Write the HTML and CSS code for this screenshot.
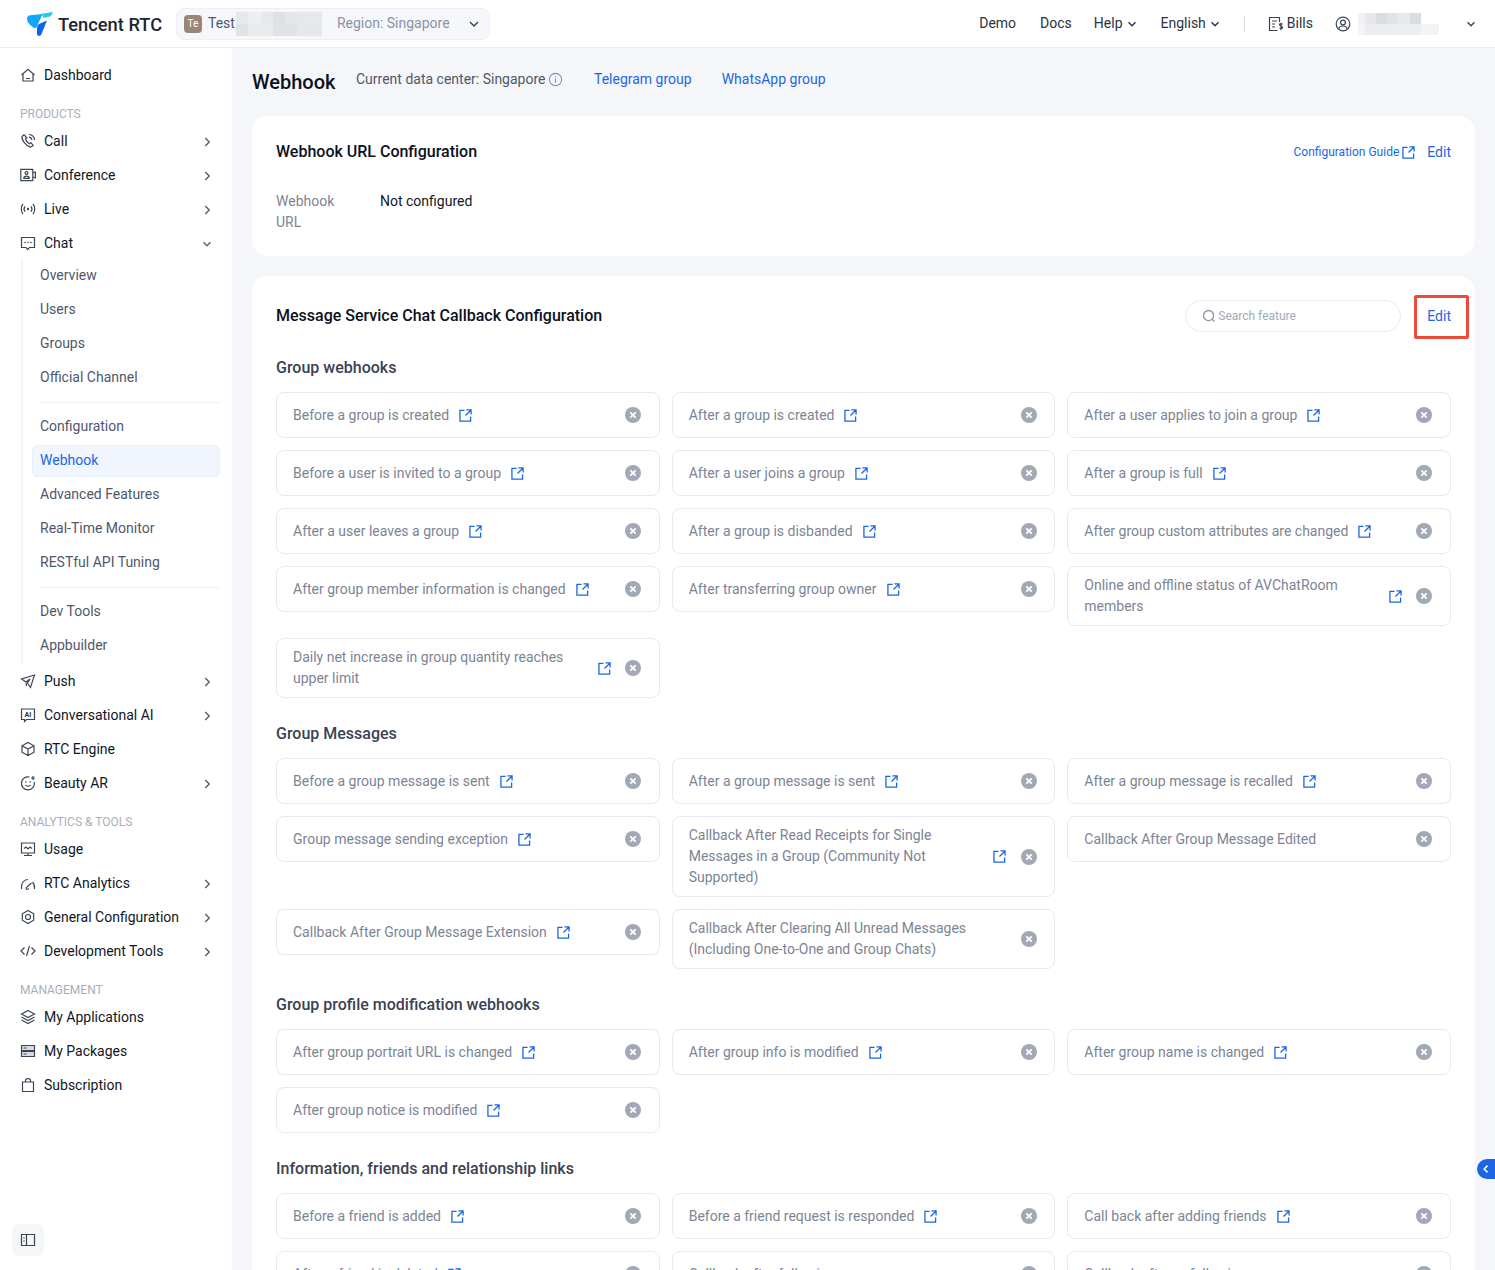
FILE: index.html
```html
<!DOCTYPE html>
<html>
<head>
	<title>Webhook - Tencent RTC</title>
	<meta charset="utf-8">
	<link rel="stylesheet" href="styles.css">
</head>
<body>

	<!-- Icon sprite -->
	<svg class="sprite" xmlns="http://www.w3.org/2000/svg">
		<symbol id="i-home" viewBox="0 0 16 16"><path d="M1.500 8 8 2.200 14.500 8M3 7v7h10V7M6 11.500h4"/></symbol>
		<symbol id="i-call" viewBox="0 0 16 16"><path d="M4 1.800 2 3.500c-.6 3.500 4 9.500 8.500 10.700l2.700-1.700-2.200-2.800-1.700 1C7.500 9.800 6 8 5.500 6l1.300-1.200zM9 1.500c3 .3 5.300 2.500 5.600 5.500M9 4.200c1.500.2 2.700 1.300 2.900 2.800"/></symbol>
		<symbol id="i-conf" viewBox="0 0 16 16"><path d="M.8 2.300h12v11.400H.8zM12.800 6l2.600-1v6l-2.600-1M3.800 11.300c0-3 5.500-3 5.500 0zM6.500 4.500a1.400 1.400 0 1 0 .01 0"/></symbol>
		<symbol id="i-live" viewBox="0 0 16 16"><path d="M3 3C.8 5.500.8 10.500 3 13M13 3c2.200 2.500 2.200 7.500 0 10M5 5.300c-1.100 1.500-1.100 3.900 0 5.400M11 5.300c1.100 1.500 1.100 3.900 0 5.400"/><circle class="solid" cx="8" cy="8" r="1.200"/></symbol>
		<symbol id="i-chat" viewBox="0 0 16 16"><path d="M1.500 2.500h13v10H9.500L7.500 14.500l-1.500-2H1.500z"/><circle class="solid" cx="5" cy="7.500" r=".8"/><circle class="solid" cx="8" cy="7.500" r=".8"/><circle class="solid" cx="11" cy="7.500" r=".8"/></symbol>
		<symbol id="i-push" viewBox="0 0 16 16"><path d="M14.500 2 1.500 6l4.500 3 4-3-2.500 4 3 4.500zM6 9l.5 4"/></symbol>
		<symbol id="i-ai" viewBox="0 0 16 16"><path d="M1.500 2h13v10.500h-8l-2 2v-2h-3z"/><text class="icon-text" x="8" y="10" text-anchor="middle">AI</text></symbol>
		<symbol id="i-cube" viewBox="0 0 16 16"><path d="M8 1.500 14 4.800v6.400L8 14.500 2 11.200V4.800zM2 4.800 8 8l6-3.200M8 8v6.500"/></symbol>
		<symbol id="i-beauty" viewBox="0 0 16 16"><path d="M9.500 2A6.500 6.500 0 1 0 14.300 7M5 7h1.500M9.500 7H11M5.200 10c1.200 1.500 4.400 1.500 5.600 0M13 1v4M11 3h4"/></symbol>
		<symbol id="i-usage" viewBox="0 0 16 16"><path d="M1.500 2h13v10h-13zM4 14.500h8M8 12v2.500M4 7.500l2-1.500 2 2 2-2 2 1.500"/></symbol>
		<symbol id="i-gauge" viewBox="0 0 16 16"><path d="M1.500 14C.8 8 4 4.500 8 4.500M14.500 14c.4-3.500-.5-5.500-2-7M7 12 11.500 8M7 12a1.200 1.200 0 1 0 1.500 1.300"/></symbol>
		<symbol id="i-config" viewBox="0 0 16 16"><path d="M8 1.500 13.700 4.800v6.400L8 14.500 2.300 11.200V4.800z"/><circle cx="8" cy="8" r="2.500"/></symbol>
		<symbol id="i-dev" viewBox="0 0 16 16"><path d="M4.500 4.500 1 8l3.500 3.500M11.500 4.500 15 8l-3.500 3.500M9.500 3 6.500 13"/></symbol>
		<symbol id="i-apps" viewBox="0 0 16 16"><path d="M8 1.500 14.500 5 8 8.500 1.500 5zM1.500 8 8 11.500 14.500 8M1.500 11 8 14.500 14.500 11"/></symbol>
		<symbol id="i-pack" viewBox="0 0 16 16"><path class="pack-fill" d="M1.500 2.500h13v5h-13zM1.500 8.500h13v5h-13z"/><path d="M3.500 5h3M3.500 11h3"/></symbol>
		<symbol id="i-bag" viewBox="0 0 16 16"><path d="M2.500 5h11v9.500h-11zM5.500 5V3.500c0-2.500 5-2.500 5 0V5"/></symbol>
		<symbol id="i-panel" viewBox="0 0 16 16"><path d="M1.500 2.500h13v11h-13zM6.500 2.500v11M3.300 6h1.400M3.300 9h1.400"/></symbol>
		<symbol id="i-bills" viewBox="0 0 16 16"><path d="M9.500 14.500h-8v-13h10V6M4 5h5M4 8h3M4 11h3M14.500 8.300c-1-1-3-.8-3 .5 0 1.500 3 1 3 2.600 0 1.300-2 1.500-3 .5M13 6.800v7.500"/></symbol>
		<symbol id="i-user" viewBox="0 0 16 16"><circle cx="8" cy="8" r="6.800"/><circle cx="8" cy="6.500" r="2.400"/><path d="M3.800 13c.6-4 7.800-4 8.400 0"/></symbol>
		<symbol id="i-info" viewBox="0 0 16 16"><circle cx="8" cy="8" r="6.500"/><path d="M8 7v4.500M8 4.500v1.200"/></symbol>
		<symbol id="i-search" viewBox="0 0 16 16"><circle cx="7.500" cy="7.500" r="5.800"/><path d="m11.700 11.700 2.500 2.500"/></symbol>
		<symbol id="i-right" viewBox="0 0 16 16"><path d="m6 3.500 4.500 4.500L6 12.500"/></symbol>
		<symbol id="i-down" viewBox="0 0 16 16"><path d="M4 6l4 4 4-4"/></symbol>
		<symbol id="i-ext" viewBox="0 0 14 14"><path d="M6 1.500H1v11.500h11.500V8M8 1h5v5M13 1 7 7"/></symbol>
		<symbol id="i-close" viewBox="0 0 16 16"><circle class="close-bg" cx="8" cy="8" r="8"/><path class="close-x" d="m5.300 5.300 5.400 5.400M10.700 5.300l-5.400 5.400"/></symbol>
	</svg>

	<header class="topbar">
		<div class="brand">
			<svg class="logo" viewBox="0 0 28 26">
				<path fill="#14a6f9" d="M1 7.500C1 5.500 2.500 4.500 4 4.200L16.500 3 11 15.500C9.500 18 8 17 6.500 16 3 13 1 11 1 7.500z"/>
				<path fill="#20cdf0" d="M15.500 2.800 27 1 25.500 4C25 5 24 5.500 23 5.800L17.500 7z"/>
				<path fill="#0f62f0" d="M21 9.500 15.500 23C14.500 25.500 11.500 25.500 11 23V17C11.300 14.500 12 13.500 14 12.500z"/>
			</svg>
			<span class="brand-name">Tencent RTC</span>
		</div>
		<div class="app-select">
			<span class="app-avatar">Te</span>
			<span class="app-name">Test</span>
			<span class="mosaic mosaic-app"></span>
			<span class="app-region">Region: Singapore</span>
			<svg class="ico chev-app"><use href="#i-down"/></svg>
		</div>
		<nav class="top-nav">
			<a class="top-link top-demo">Demo</a>
			<a class="top-link top-docs">Docs</a>
			<a class="top-link top-help">Help<svg class="ico chev-top"><use href="#i-down"/></svg></a>
			<a class="top-link top-lang">English<svg class="ico chev-top"><use href="#i-down"/></svg></a>
			<span class="top-sep"></span>
			<a class="top-link top-bills"><svg class="ico"><use href="#i-bills"/></svg>Bills</a>
			<svg class="ico top-user"><use href="#i-user"/></svg>
			<span class="mosaic mosaic-user"></span>
			<svg class="ico chev-user"><use href="#i-down"/></svg>
		</nav>
	</header>

	<div class="layout">
		<aside class="sidebar">
			<a class="nav-row"><svg class="ico"><use href="#i-home"/></svg>Dashboard</a>

			<div class="nav-label">PRODUCTS</div>
			<a class="nav-row"><svg class="ico"><use href="#i-call"/></svg>Call<svg class="ico chev"><use href="#i-right"/></svg></a>
			<a class="nav-row"><svg class="ico"><use href="#i-conf"/></svg>Conference<svg class="ico chev"><use href="#i-right"/></svg></a>
			<a class="nav-row"><svg class="ico"><use href="#i-live"/></svg>Live<svg class="ico chev"><use href="#i-right"/></svg></a>
			<a class="nav-row"><svg class="ico"><use href="#i-chat"/></svg>Chat<svg class="ico chev"><use href="#i-down"/></svg></a>

			<div class="sub-nav">
				<a class="sub-row">Overview</a>
				<a class="sub-row">Users</a>
				<a class="sub-row">Groups</a>
				<a class="sub-row">Official Channel</a>
				<div class="sub-line"></div>
				<a class="sub-row">Configuration</a>
				<a class="sub-row active">Webhook</a>
				<a class="sub-row">Advanced Features</a>
				<a class="sub-row">Real-Time Monitor</a>
				<a class="sub-row">RESTful API Tuning</a>
				<div class="sub-line"></div>
				<a class="sub-row">Dev Tools</a>
				<a class="sub-row">Appbuilder</a>
			</div>

			<a class="nav-row"><svg class="ico"><use href="#i-push"/></svg>Push<svg class="ico chev"><use href="#i-right"/></svg></a>
			<a class="nav-row"><svg class="ico"><use href="#i-ai"/></svg>Conversational AI<svg class="ico chev"><use href="#i-right"/></svg></a>
			<a class="nav-row"><svg class="ico"><use href="#i-cube"/></svg>RTC Engine</a>
			<a class="nav-row"><svg class="ico"><use href="#i-beauty"/></svg>Beauty AR<svg class="ico chev"><use href="#i-right"/></svg></a>

			<div class="nav-label">ANALYTICS &amp; TOOLS</div>
			<a class="nav-row"><svg class="ico"><use href="#i-usage"/></svg>Usage</a>
			<a class="nav-row"><svg class="ico"><use href="#i-gauge"/></svg>RTC Analytics<svg class="ico chev"><use href="#i-right"/></svg></a>
			<a class="nav-row"><svg class="ico"><use href="#i-config"/></svg>General Configuration<svg class="ico chev"><use href="#i-right"/></svg></a>
			<a class="nav-row"><svg class="ico"><use href="#i-dev"/></svg>Development Tools<svg class="ico chev"><use href="#i-right"/></svg></a>

			<div class="nav-label">MANAGEMENT</div>
			<a class="nav-row"><svg class="ico"><use href="#i-apps"/></svg>My Applications</a>
			<a class="nav-row"><svg class="ico"><use href="#i-pack"/></svg>My Packages</a>
			<a class="nav-row"><svg class="ico"><use href="#i-bag"/></svg>Subscription</a>

			<button class="collapse"><svg class="ico"><use href="#i-panel"/></svg></button>
		</aside>

		<main class="content">
			<div class="page-head">
				<h1>Webhook</h1>
				<span class="page-note">Current data center: Singapore</span>
				<svg class="ico info"><use href="#i-info"/></svg>
				<a class="link group-link">Telegram group</a>
				<a class="link group-link">WhatsApp group</a>
			</div>

			<section class="card">
				<div class="card-head">
					<h2>Webhook URL Configuration</h2>
					<div class="card-actions guide-actions">
						<a class="link guide">Configuration Guide<svg class="ext"><use href="#i-ext"/></svg></a>
						<a class="link">Edit</a>
					</div>
				</div>
				<div class="field">
					<span class="field-name">Webhook URL</span>
					<span class="field-value">Not configured</span>
				</div>
			</section>

			<section class="card card-hooks">
				<div class="card-head hooks-head">
					<h2>Message Service Chat Callback Configuration</h2>
					<div class="card-actions">
						<div class="search"><svg class="ico"><use href="#i-search"/></svg>Search feature</div>
						<a class="link edit-mark">Edit<span class="red-box"></span></a>
					</div>
				</div>

				<h3>Group webhooks</h3>
				<div class="hook-grid">
					<div class="hook"><span>Before a group is created</span><svg class="ext"><use href="#i-ext"/></svg><svg class="close"><use href="#i-close"/></svg></div>
					<div class="hook"><span>After a group is created</span><svg class="ext"><use href="#i-ext"/></svg><svg class="close"><use href="#i-close"/></svg></div>
					<div class="hook"><span>After a user applies to join a group</span><svg class="ext"><use href="#i-ext"/></svg><svg class="close"><use href="#i-close"/></svg></div>
					<div class="hook"><span>Before a user is invited to a group</span><svg class="ext"><use href="#i-ext"/></svg><svg class="close"><use href="#i-close"/></svg></div>
					<div class="hook"><span>After a user joins a group</span><svg class="ext"><use href="#i-ext"/></svg><svg class="close"><use href="#i-close"/></svg></div>
					<div class="hook"><span>After a group is full</span><svg class="ext"><use href="#i-ext"/></svg><svg class="close"><use href="#i-close"/></svg></div>
					<div class="hook"><span>After a user leaves a group</span><svg class="ext"><use href="#i-ext"/></svg><svg class="close"><use href="#i-close"/></svg></div>
					<div class="hook"><span>After a group is disbanded</span><svg class="ext"><use href="#i-ext"/></svg><svg class="close"><use href="#i-close"/></svg></div>
					<div class="hook"><span>After group custom attributes are changed</span><svg class="ext"><use href="#i-ext"/></svg><svg class="close"><use href="#i-close"/></svg></div>
					<div class="hook"><span>After group member information is changed</span><svg class="ext"><use href="#i-ext"/></svg><svg class="close"><use href="#i-close"/></svg></div>
					<div class="hook"><span>After transferring group owner</span><svg class="ext"><use href="#i-ext"/></svg><svg class="close"><use href="#i-close"/></svg></div>
					<div class="hook"><span>Online and offline status of AVChatRoom members</span><svg class="ext"><use href="#i-ext"/></svg><svg class="close"><use href="#i-close"/></svg></div>
					<div class="hook"><span>Daily net increase in group quantity reaches upper limit</span><svg class="ext"><use href="#i-ext"/></svg><svg class="close"><use href="#i-close"/></svg></div>
				</div>

				<h3>Group Messages</h3>
				<div class="hook-grid">
					<div class="hook"><span>Before a group message is sent</span><svg class="ext"><use href="#i-ext"/></svg><svg class="close"><use href="#i-close"/></svg></div>
					<div class="hook"><span>After a group message is sent</span><svg class="ext"><use href="#i-ext"/></svg><svg class="close"><use href="#i-close"/></svg></div>
					<div class="hook"><span>After a group message is recalled</span><svg class="ext"><use href="#i-ext"/></svg><svg class="close"><use href="#i-close"/></svg></div>
					<div class="hook"><span>Group message sending exception</span><svg class="ext"><use href="#i-ext"/></svg><svg class="close"><use href="#i-close"/></svg></div>
					<div class="hook"><span>Callback After Read Receipts for Single Messages in a Group (Community Not Supported)</span><svg class="ext"><use href="#i-ext"/></svg><svg class="close"><use href="#i-close"/></svg></div>
					<div class="hook"><span>Callback After Group Message Edited</span><svg class="close"><use href="#i-close"/></svg></div>
					<div class="hook"><span>Callback After Group Message Extension</span><svg class="ext"><use href="#i-ext"/></svg><svg class="close"><use href="#i-close"/></svg></div>
					<div class="hook"><span>Callback After Clearing All Unread Messages (Including One-to-One and Group Chats)</span><svg class="close"><use href="#i-close"/></svg></div>
				</div>

				<h3>Group profile modification webhooks</h3>
				<div class="hook-grid">
					<div class="hook"><span>After group portrait URL is changed</span><svg class="ext"><use href="#i-ext"/></svg><svg class="close"><use href="#i-close"/></svg></div>
					<div class="hook"><span>After group info is modified</span><svg class="ext"><use href="#i-ext"/></svg><svg class="close"><use href="#i-close"/></svg></div>
					<div class="hook"><span>After group name is changed</span><svg class="ext"><use href="#i-ext"/></svg><svg class="close"><use href="#i-close"/></svg></div>
					<div class="hook"><span>After group notice is modified</span><svg class="ext"><use href="#i-ext"/></svg><svg class="close"><use href="#i-close"/></svg></div>
				</div>

				<h3>Information, friends and relationship links</h3>
				<div class="hook-grid">
					<div class="hook"><span>Before a friend is added</span><svg class="ext"><use href="#i-ext"/></svg><svg class="close"><use href="#i-close"/></svg></div>
					<div class="hook"><span>Before a friend request is responded</span><svg class="ext"><use href="#i-ext"/></svg><svg class="close"><use href="#i-close"/></svg></div>
					<div class="hook"><span>Call back after adding friends</span><svg class="ext"><use href="#i-ext"/></svg><svg class="close"><use href="#i-close"/></svg></div>
					<div class="hook"><span>After a friend is deleted</span><svg class="ext"><use href="#i-ext"/></svg><svg class="close"><use href="#i-close"/></svg></div>
					<div class="hook"><span>Callback after following</span><svg class="close"><use href="#i-close"/></svg></div>
					<div class="hook"><span>Callback after unfollowing</span><svg class="close"><use href="#i-close"/></svg></div>
				</div>
			</section>
		</main>
	</div>

	<button class="side-tab"><svg class="ico"><use href="#i-right"/></svg></button>

</body>
</html>
```

FILE: styles.css
```css
*,
*:before,
*:after {
	box-sizing: border-box;
}

html,
body {
	height: 1270px;
	overflow: hidden;
}

body {
	margin: 0;
	background-color: #f4f6fa;
	color: #0f1726;
	font-family: Roboto, "Liberation Sans", sans-serif;
	font-size: 14px;
	line-height: 21px;
}

.sprite {
	display: none;
}

/* Icons */
.ico {
	display: block;
	flex: none;
	width: 16px;
	height: 16px;
	fill: none;
	stroke: #3d4555;
	stroke-width: 1.2;
}

.solid {
	fill: #3d4555;
	stroke: none;
}

.pack-fill {
	fill: #d8dbe1;
}

.icon-text {
	fill: #2a3140;
	stroke: none;
	font-size: 7px;
	font-weight: 700;
}

.ext {
	flex: none;
	width: 13px;
	height: 13px;
	margin-left: 10px;
	fill: none;
	stroke: #1c66e5;
	stroke-width: 1.4;
}

.close {
	flex: none;
	width: 16px;
	height: 16px;
	margin-left: auto;
}

.close-bg {
	fill: #a2a8b6;
}

.close-x {
	fill: none;
	stroke: #fff;
	stroke-width: 1.8;
}

/* Top bar */
.topbar {
	display: flex;
	align-items: center;
	height: 48px;
	background-color: #fff;
	border-bottom: 1px solid #eceef3;
}

.brand {
	display: flex;
	align-items: center;
	width: 176px;
	padding-left: 26px;
}

.logo {
	width: 28px;
	height: 26px;
}

.brand-name {
	margin: 1px 0 0 4px;
	color: #1d2532;
	font-size: 18.3px;
	font-weight: 500;
	white-space: nowrap;
}

.app-select {
	display: flex;
	align-items: center;
	width: 314px;
	height: 32px;
	padding-left: 7px;
	background-color: #f5f7fb;
	border: 1px solid #eceff5;
	border-radius: 8px;
}

.app-avatar {
	width: 18px;
	height: 18px;
	margin-right: 6px;
	background-color: #9b8478;
	border-radius: 4px;
	color: #fff;
	font-size: 10px;
	line-height: 18px;
	text-align: center;
}

.app-name {
	color: #4f586b;
}

.mosaic {
	display: block;
	flex: none;
	background-repeat: no-repeat;
	background-size: 100% 50%;
	background-position: top, bottom;
}

.mosaic-app {
	width: 86px;
	height: 24px;
	margin: 0 15px 0 1px;
	background-image:
		linear-gradient(90deg, #e6e8eb 0 14%, #eceef0 14% 30%, #e6e8eb 30% 43%, #dde1e4 43% 57%, #e4e6e9 57% 71%, #e6e8ea 71% 100%),
		linear-gradient(90deg, #e0e2e6 0 14%, #e8eaec 14% 43%, #e0e2e6 43% 71%, #e5e7ea 71% 100%);
}

.app-region {
	color: #8a93a5;
}

.chev-app {
	margin-left: 16px;
	stroke-width: 1.5;
}

.top-nav {
	display: flex;
	align-items: center;
	margin-left: auto;
	padding-right: 17px;
	color: #2b3342;
}

.top-link {
	display: flex;
	align-items: center;
	margin-right: 24px;
	white-space: nowrap;
}

.top-docs {
	margin-right: 22px;
}

.top-help {
	margin-right: 22px;
}

.top-lang {
	margin-right: 22px;
}

.chev-top {
	width: 14px;
	height: 14px;
	margin-left: 2px;
	stroke: #2b3342;
	stroke-width: 1.6;
}

.top-sep {
	width: 1px;
	height: 16px;
	margin-right: 23px;
	background-color: #d5d8df;
}

.top-bills {
	gap: 3px;
	margin-right: 22px;
}

.top-user {
	margin-right: 7px;
}

.mosaic-user {
	width: 92px;
	height: 22px;
	margin-right: 14px;
	background-image:
		linear-gradient(90deg, #f0f1f3 0 8%, #e6e7ea 8% 20%, #dadce0 20% 32%, #e1e3e6 32% 44%, #e8e9ec 44% 56%, #dadce2 56% 68%, #fff 68% 100%),
		linear-gradient(90deg, #f5f5f6 0 8%, #ecedef 8% 44%, #eceef0 44% 68%, #f3f4f5 68% 88%, #fff 88% 100%);
}

.chev-user {
	width: 14px;
	height: 14px;
	stroke-width: 1.6;
}

/* Page layout */
.layout {
	display: grid;
	grid-template-columns: 232px 1fr;
	grid-template-rows: 1222px;
}

.sidebar {
	position: relative;
	padding-top: 10px;
	background-color: #fff;
}

.nav-row {
	display: flex;
	align-items: center;
	gap: 8px;
	height: 34px;
	padding-left: 20px;
	white-space: nowrap;
}

.chev {
	width: 14px;
	height: 14px;
	margin: 2px 18px 0 auto;
	stroke: #5a6273;
	stroke-width: 1.7;
}

.nav-label {
	height: 32px;
	padding: 12px 0 0 20px;
	color: #a8aebd;
	font-size: 12px;
	line-height: 20px;
}

.sub-nav {
	width: 199px;
	margin: -2px 0 0 21px;
	padding: 0 0 2px 9px;
	border-left: 2px solid #f2f4f9;
}

.sub-row {
	display: block;
	height: 32px;
	margin-top: 2px;
	padding-left: 8px;
	border: 1px solid transparent;
	border-left-width: 0;
	border-radius: 6px;
	color: #4f586b;
	line-height: 29px;
}

.sub-row.active {
	background-color: #f0f5fe;
	border: 1px solid #e9effb;
	padding-left: 7px;
	color: #1c66e5;
}

.sub-line {
	height: 1px;
	margin: 8px 0 8px 8px;
	background-color: #eff1f5;
}

.collapse {
	position: absolute;
	left: 12px;
	bottom: 14px;
	display: flex;
	align-items: center;
	justify-content: center;
	width: 32px;
	height: 32px;
	padding: 0;
	background-color: #f5f6f8;
	border: 0;
	border-radius: 6px;
}

.content {
	padding: 0 20px;
	min-width: 0;
}

.page-head {
	display: flex;
	align-items: center;
	height: 68px;
	padding-bottom: 6px;
}

h1 {
	margin: 6px 20.5px 0 0;
	color: #0b111d;
	font-size: 20px;
	font-weight: 500;
	line-height: 28px;
}

.page-note {
	color: #4f586b;
}

.info {
	width: 15px;
	height: 15px;
	margin: 0 30.5px 0 3px;
	stroke: #8a93a5;
}

.link {
	color: #1c66e5;
}

.group-link {
	margin-right: 30px;
}

/* Cards */
.card {
	padding: 24px 24px 23px;
	background-color: #fff;
	border-radius: 16px;
}

.card-hooks {
	margin-top: 20px;
}

.card-head {
	display: flex;
	align-items: center;
	justify-content: space-between;
	height: 24px;
}

.hooks-head {
	height: 32px;
}

h2 {
	margin: 0;
	color: #0b111d;
	font-size: 16px;
	font-weight: 500;
	line-height: 24px;
}

.card-actions {
	display: flex;
	align-items: center;
}

.guide-actions {
	margin-top: 1px;
}

.guide {
	display: flex;
	align-items: center;
	margin-right: 12px;
	font-size: 12px;
}

.guide .ext {
	margin-left: 3px;
}

.field {
	display: flex;
	margin-top: 27px;
}

.field-name {
	width: 104px;
	padding-right: 30px;
	color: #7c8495;
}

.search {
	display: flex;
	align-items: center;
	width: 216px;
	height: 32px;
	padding-left: 16px;
	border: 1px solid #eaecf3;
	border-radius: 16px;
	color: #a2a8b6;
	font-size: 12px;
}

.search .ico {
	width: 14px;
	height: 14px;
	margin-right: 2px;
	stroke: #8a93a5;
	stroke-width: 1.5;
}

.edit-mark {
	position: relative;
	margin-left: 26px;
}

/* Red marker drawn over the Edit link */
.red-box {
	position: absolute;
	left: -13px;
	right: -18px;
	top: -11px;
	bottom: -12px;
	border: 3px solid #ee4a3c;
	border-radius: 2px;
}

h3 {
	margin: 24px 0 12px;
	color: #3a4252;
	font-size: 16px;
	font-weight: 500;
	line-height: 24px;
}

.hook-grid {
	display: grid;
	grid-template-columns: repeat(3, 1fr);
	gap: 12px;
	align-items: start;
}

.hook {
	display: flex;
	align-items: center;
	min-height: 46px;
	padding: 8px 17.5px 8px 16px;
	background-color: #fff;
	border: 1px solid #e6e9f2;
	border-radius: 8px;
	color: #7c8495;
}

.hook .ext {
	margin-right: 14.5px;
}

/* Tab on the right edge */
.side-tab {
	position: fixed;
	right: 0;
	top: 1159px;
	display: flex;
	align-items: center;
	justify-content: center;
	width: 18px;
	height: 20px;
	padding: 0;
	background-color: #1c66e5;
	border: 0;
	border-radius: 10px 0 0 10px;
}

.side-tab .ico {
	width: 12px;
	height: 12px;
	stroke: #fff;
	stroke-width: 2;
	transform: scaleX(-1);
}
```
